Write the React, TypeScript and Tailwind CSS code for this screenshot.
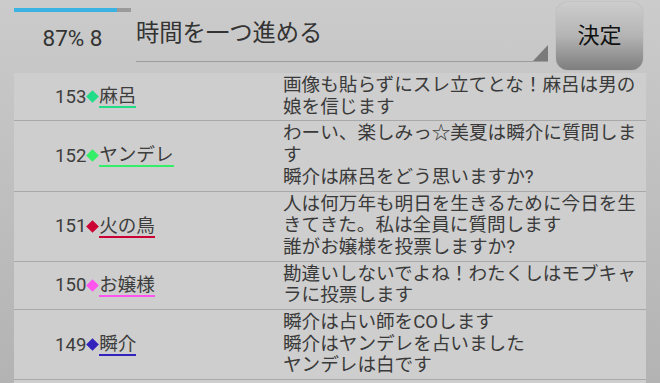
import React from "react";

type Row = { no: number; name: string; color: string; lines: string[] };

const rows: Row[] = [
  { no: 153, name: "麻呂", color: "#22dd88", lines: ["画像も貼らずにスレ立てとな！麻呂は男の", "娘を信じます"] },
  { no: 152, name: "ヤンデレ", color: "#33ee66", lines: ["わーい、楽しみっ☆美夏は瞬介に質問しま", "す", "瞬介は麻呂をどう思いますか?"] },
  { no: 151, name: "火の鳥", color: "#cc0033", lines: ["人は何万年も明日を生きるために今日を生", "きてきた。私は全員に質問します", "誰がお嬢様を投票しますか?"] },
  { no: 150, name: "お嬢様", color: "#ff55ee", lines: ["勘違いしないでよね！わたくしはモブキャ", "ラに投票します"] },
  { no: 149, name: "瞬介", color: "#3322bb", lines: ["瞬介は占い師をCOします", "瞬介はヤンデレを占いました", "ヤンデレは白です"] },
];

export default function App() {
  return (
    <div
      className="w-[660px] h-[383px] overflow-hidden flex flex-col bg-gradient-to-b from-[#cbcbcb] to-[#b3b3b3] text-[#3a3a3a]"
      style={{ fontFamily: 'Roboto, "Noto Sans CJK JP", sans-serif' }}
    >
      {/* header */}
      <div className="flex h-[73px] shrink-0 pl-[14px]">
        <div className="w-[117px] pt-[8px] flex flex-col">
          <div className="flex h-[4px]">
            <div className="w-[103px] bg-[#3ab2e2]" />
            <div className="flex-1 bg-[#9a9a9a]" />
          </div>
          <div className="mt-[13px] text-center text-[22.5px] leading-[27px] text-[#333]">87% 8</div>
        </div>
        <div className="ml-[5px] w-[412px] h-[62px] relative border-b-[1.5px] border-[#9c9c9c] pt-[18px]">
          <div className="text-[23.3px] leading-[30px] text-[#333] whitespace-nowrap">時間を一つ進める</div>
          <svg className="absolute right-0 bottom-0" width="15" height="16" viewBox="0 0 15 16">
            <polygon points="15,0 15,16 0,16" fill="#7a7a7a" />
          </svg>
        </div>
        <div className="ml-[8px] mt-[2px] w-[87px] h-[68px] rounded-[12px] bg-gradient-to-b from-[#cdcdcd] via-[#b4b4b4] to-[#7e7e7e] flex items-center justify-center shadow-[0_0_1px_rgba(0,0,0,0.3)]">
          <span className="text-[22px] leading-[28px] text-[#111]">決定</span>
        </div>
      </div>
      {/* list */}
      <div className="mx-[14px] flex-1 bg-[#cecece] flex flex-col">
        {rows.map((r) => (
          <div key={r.no} className="flex border-b border-[#a9a9a9]">
            <div className="w-[269px] pl-[41px] flex items-center text-[18.6px] text-[#3d3d3d]">
              <span className="leading-[22px]">{r.no}</span>
              <span
                className="inline-block w-[9px] h-[9px] rotate-45 ml-[2px] mr-[1.8px]"
                style={{ backgroundColor: r.color }}
              />
              <span className="inline-block leading-[20px] pt-[1px] border-b-2 whitespace-nowrap" style={{ borderColor: r.color }}>
                {r.name}
              </span>
            </div>
            <div className="flex-1 py-[2px] text-[18.6px] leading-[21.7px] text-[#3a3a3a]">
              {r.lines.map((l, i) => (
                <div key={i} className="whitespace-nowrap">{l}</div>
              ))}
            </div>
          </div>
        ))}
      </div>
    </div>
  );
}
